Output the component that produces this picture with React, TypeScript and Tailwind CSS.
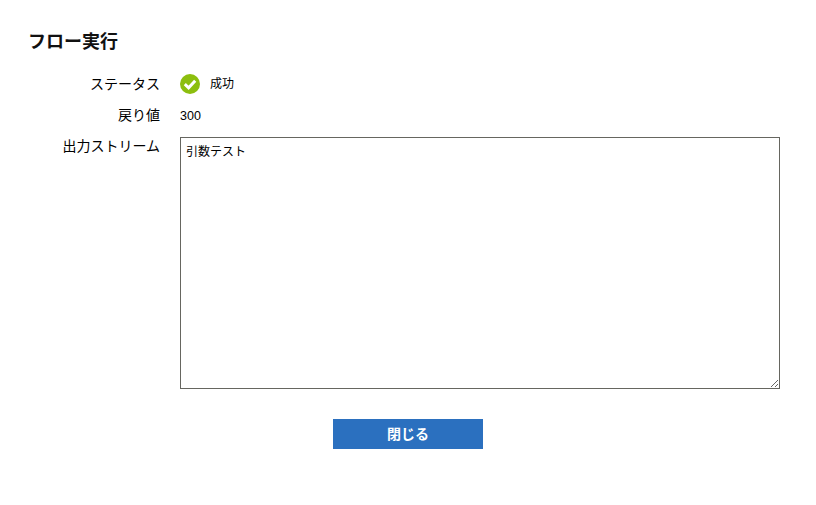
const font = { fontFamily: '"Liberation Sans", "Noto Sans CJK JP", sans-serif' };

function CheckIcon() {
  return (
    <svg width="20" height="20" viewBox="0 0 20 20">
      <circle cx="10" cy="10" r="10" fill="#8cbe0e" />
      <path d="M4.8 10.2 L8.6 13.8 L15.2 6.8" fill="none" stroke="#fff" strokeWidth="3" />
    </svg>
  );
}

export default function App() {
  return (
    <div className="h-[505px] w-[816px] bg-white pt-[30px] text-black" style={font}>
      <h1 className="ml-[28px] text-lg leading-6 font-bold text-[#111]">フロー実行</h1>

      <div className="mt-[18px] flex h-6 items-center">
        <div className="w-[160px] text-right text-sm">ステータス</div>
        <div className="ml-5 flex items-center">
          <CheckIcon />
          <span className="ml-2.5 text-xs">成功</span>
        </div>
      </div>

      <div className="mt-[7px] flex h-6 items-center">
        <div className="w-[160px] text-right text-sm">戻り値</div>
        <div className="ml-5 pt-0.5 text-[12.5px]">300</div>
      </div>

      <div className="mt-[10px] flex">
        <div className="w-[160px] text-right text-sm leading-[18px]">出力ストリーム</div>
        <textarea
          readOnly
          defaultValue="引数テスト"
          className="ml-5 h-[252px] w-[600px] border border-[#666660] px-[5px] pt-1.5 pb-[5px] text-xs leading-[16px] outline-none"
          style={font}
        />
      </div>

      <div className="mt-[30px] flex justify-center">
        <button className="h-[30px] w-[150px] bg-[#2b70bf] pb-px text-sm font-bold text-white">閉じる</button>
      </div>
    </div>
  );
}
